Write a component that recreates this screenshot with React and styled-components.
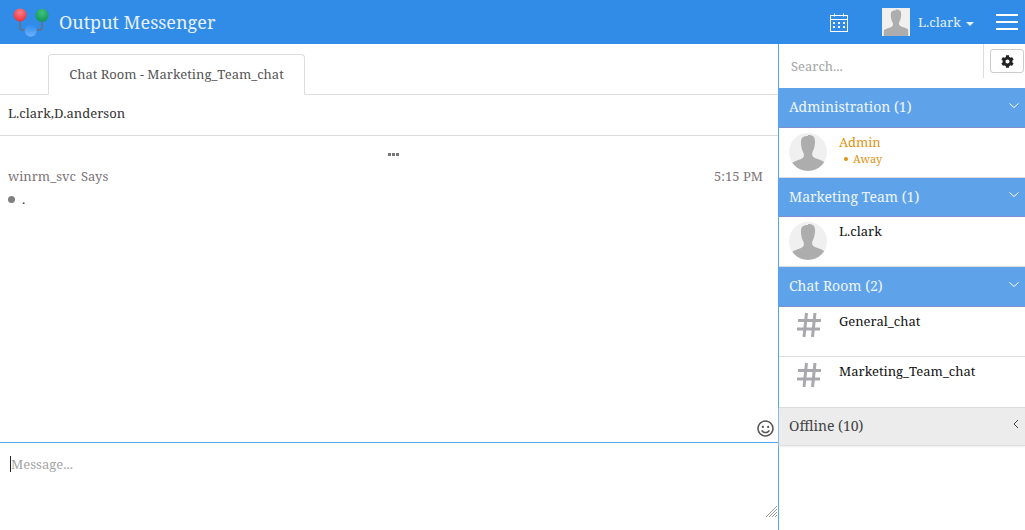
import React from "react";
import styled, { createGlobalStyle } from "styled-components";
import { FaCog, FaRegSmile } from "react-icons/fa";

const GlobalStyle = createGlobalStyle`
  html, body {
    margin: 0;
    padding: 0;
    background: #fff;
    font-family: "Noto Serif", "DejaVu Serif", "Liberation Serif", serif;
    overflow: hidden;
  }
  * { box-sizing: border-box; }
`;

const Logo = () => (
  <svg width="40" height="34" viewBox="0 0 40 34">
    <defs>
      <radialGradient id="red" cx="50%" cy="30%" r="70%">
        <stop offset="0" stopColor="#ff8088" />
        <stop offset="1" stopColor="#e8303c" />
      </radialGradient>
      <radialGradient id="green" cx="50%" cy="30%" r="70%">
        <stop offset="0" stopColor="#3fc47e" />
        <stop offset="1" stopColor="#129456" />
      </radialGradient>
      <linearGradient id="blue" x1="0" y1="0" x2="0" y2="1">
        <stop offset="0" stopColor="#2f8cf0" />
        <stop offset="1" stopColor="#6cb0ff" />
      </linearGradient>
    </defs>
    <path d="M9 10v12q0 3 3 3h16q3 0 3-3v-12" fill="none" stroke="#5a7596" strokeWidth="2" />
    <circle cx="9" cy="10" r="6.500" fill="url(#red)" />
    <circle cx="31" cy="10.300" r="6.500" fill="url(#green)" />
    <circle cx="19.700" cy="25.700" r="6" fill="url(#blue)" />
  </svg>
);

const Person = () => (
  <svg width="100%" height="100%" viewBox="0 0 38 38">
    <path
      d="M19 3c-4.500 0-7 1.500-7 6 0 2 0 3 .4 4.500.2 1 .2 2 .6 3 .4 1.200 1 2.500 1.500 3.500.5 1 .5 3 0 4-.8 1.500-3.500 2.500-6.500 3.500-3 1-4.500 1.800-5.500 3V38h33v-8.500c-1-1.200-2.500-2-5.500-3s-5.700-2-6.500-3.500c-.5-1-.5-3 0-4 .5-1 1.100-2.300 1.500-3.500.4-1 .4-2 .6-3 .4-1.500.4-2.500.4-4.500 0-4.500-2.500-6-7-6z"
      fill="#adadad"
    />
  </svg>
);

const Calendar = () => (
  <svg width="18" height="19" viewBox="0 0 18 19" fill="none" stroke="#fff">
    <rect x=".5" y="2.500" width="17" height="16" />
    <path d="M.5 6.500h17M4.500 .5v3M13.500 .5v3" />
    <g fill="#fff" stroke="none">
      <rect x="3" y="9" width="2" height="2" />
      <rect x="8" y="9" width="2" height="2" />
      <rect x="13" y="9" width="2" height="2" />
      <rect x="3" y="13" width="2" height="2" />
      <rect x="8" y="13" width="2" height="2" />
      <rect x="13" y="13" width="2" height="2" />
    </g>
  </svg>
);

const Hash = () => (
  <svg width="26" height="26" viewBox="0 0 26 26" fill="none" stroke="#a9a9ad" strokeWidth="3">
    <path d="M10.500 1 8 25M19 1 16.500 25M2 8.500h23M1 17h23" />
  </svg>
);

const Chevron = ({ $left }) => (
  <svg width="10" height="10" viewBox="0 0 10 10" fill="none" stroke={$left ? "#444" : "#fff"} strokeWidth="1">
    <path d={$left ? "M7 1 3 5l4 4" : "M.5 2.500 5 6.500l4.500-4"} />
  </svg>
);

const ResizeGrip = () => (
  <svg width="11" height="11" viewBox="0 0 11 11" stroke="#999" strokeWidth="1">
    <path d="M0 11 11 0M3 11l8-8M6 11l5-5M9 11l2-2" />
  </svg>
);

export default function App() {
  return (
    <>
      <GlobalStyle />
      <Page>
        <Header>
          <Brand>
            <Logo />
            <BrandName>Output Messenger</BrandName>
          </Brand>
          <HeaderRight>
            <Calendar />
            <UserBlock>
              <HeaderAvatar>
                <Person />
              </HeaderAvatar>
              <UserName>L.clark</UserName>
              <Caret />
            </UserBlock>
            <Burger>
              <span />
              <span />
              <span />
            </Burger>
          </HeaderRight>
        </Header>
        <Body>
          <ChatPane>
            <TabBar>
              <Tab>Chat Room - Marketing_Team_chat</Tab>
            </TabBar>
            <Members>L.clark,D.anderson</Members>
            <Messages>
              <MoreDots>
                <i />
                <i />
                <i />
              </MoreDots>
              <MessageHead>
                <span>
                  winrm_svc<Says>Says</Says>
                </span>
                <span>5:15 PM</span>
              </MessageHead>
              <MessageLine>
                <Bullet />
                <span>.</span>
              </MessageLine>
              <EmojiButton>
                <FaRegSmile size={17} />
              </EmojiButton>
            </Messages>
            <Composer>
              <Cursor />
              <Placeholder>Message...</Placeholder>
              <Grip>
                <ResizeGrip />
              </Grip>
            </Composer>
          </ChatPane>
          <Sidebar>
            <SearchRow>
              <SearchText>Search...</SearchText>
              <SettingsButton>
                <FaCog size={13} />
              </SettingsButton>
            </SearchRow>
            <GroupHeader>
              Administration (1)
              <ChevronSlot>
                <Chevron />
              </ChevronSlot>
            </GroupHeader>
            <ContactRow>
              <ContactAvatar>
                <Person />
              </ContactAvatar>
              <ContactInfo>
                <ContactName $away>Admin</ContactName>
                <AwayStatus>
                  <AwayDot />
                  Away
                </AwayStatus>
              </ContactInfo>
            </ContactRow>
            <GroupHeader>
              Marketing Team (1)
              <ChevronSlot>
                <Chevron />
              </ChevronSlot>
            </GroupHeader>
            <ContactRow>
              <ContactAvatar>
                <Person />
              </ContactAvatar>
              <ContactInfo>
                <ContactName>L.clark</ContactName>
              </ContactInfo>
            </ContactRow>
            <GroupHeader>
              Chat Room (2)
              <ChevronSlot>
                <Chevron />
              </ChevronSlot>
            </GroupHeader>
            <ContactRow>
              <RoomIcon>
                <Hash />
              </RoomIcon>
              <ContactInfo>
                <ContactName>General_chat</ContactName>
              </ContactInfo>
            </ContactRow>
            <ContactRow>
              <RoomIcon>
                <Hash />
              </RoomIcon>
              <ContactInfo>
                <ContactName>Marketing_Team_chat</ContactName>
              </ContactInfo>
            </ContactRow>
            <OfflineHeader>
              Offline (10)
              <OfflineChevron>
                <Chevron $left />
              </OfflineChevron>
            </OfflineHeader>
          </Sidebar>
        </Body>
      </Page>
    </>
  );
}

const Page = styled.div`
  width: 1025px;
  height: 530px;
  display: flex;
  flex-direction: column;
`;

const Header = styled.header`
  height: 44px;
  flex: none;
  background: #318ce7;
  display: flex;
  align-items: center;
  justify-content: space-between;
  padding: 0 7px 0 11px;
`;

const Brand = styled.div`
  display: flex;
  align-items: center;
  gap: 8px;
`;

const BrandName = styled.span`
  color: #e6f1fc;
  font-size: 18px;
`;

const HeaderRight = styled.div`
  display: flex;
  align-items: center;
`;

const UserBlock = styled.div`
  display: flex;
  align-items: center;
  margin-left: 34px;
  width: 114px;
`;

const HeaderAvatar = styled.div`
  width: 28px;
  height: 28px;
  background: #f0f0f0;
  overflow: hidden;
`;

const UserName = styled.span`
  color: #e6f1fc;
  font-size: 13px;
  margin-left: 8px;
`;

const Caret = styled.i`
  width: 0;
  height: 0;
  margin-left: 5px;
  margin-top: 3px;
  border-left: 4px solid transparent;
  border-right: 4px solid transparent;
  border-top: 4px solid #e6f1fc;
`;

const Burger = styled.div`
  width: 22px;
  display: flex;
  flex-direction: column;
  gap: 5px;

  span {
    height: 2px;
    background: #fff;
  }
`;

const Body = styled.div`
  flex: 1;
  display: flex;
  min-height: 0;
`;

const ChatPane = styled.main`
  width: 779px;
  flex: none;
  display: flex;
  flex-direction: column;
  border-right: 1px solid #55a6ee;
`;

const TabBar = styled.div`
  height: 51px;
  flex: none;
  display: flex;
  align-items: flex-end;
  padding-left: 48px;
  border-bottom: 1px solid #ddd;
`;

const Tab = styled.div`
  width: 257px;
  height: 41px;
  margin-bottom: -1px;
  padding-bottom: 2px;
  background: #fff;
  border: 1px solid #ddd;
  border-bottom-color: #fff;
  border-radius: 4px 4px 0 0;
  display: flex;
  align-items: center;
  justify-content: center;
  font-size: 13px;
  color: #555;
`;

const Members = styled.div`
  height: 41px;
  flex: none;
  display: flex;
  align-items: center;
  padding: 0 0 5px 8px;
  border-bottom: 1px solid #ddd;
  font-size: 13px;
  color: #333;
`;

const Messages = styled.section`
  position: relative;
  flex: 1;
  padding: 0 15px 0 8px;
`;

const MoreDots = styled.div`
  display: flex;
  justify-content: center;
  gap: 1px;
  padding: 17px 0 0 16px;
  height: 32px;

  i {
    width: 3px;
    height: 3px;
    background: #777;
  }
`;

const MessageHead = styled.div`
  display: flex;
  justify-content: space-between;
  font-size: 13px;
  line-height: 16px;
  color: #7d7478;
`;

const Says = styled.span`
  margin-left: 5px;
`;

const MessageLine = styled.div`
  display: flex;
  align-items: center;
  gap: 7px;
  margin-top: 7px;
  height: 16px;
  font-size: 13px;
  color: #333;
`;

const Bullet = styled.i`
  width: 7px;
  height: 7px;
  border-radius: 50%;
  background: #808080;
`;

const EmojiButton = styled.div`
  position: absolute;
  right: 4px;
  bottom: 5px;
  color: #555;
  display: flex;
`;

const Composer = styled.div`
  position: relative;
  height: 88px;
  flex: none;
  border-top: 1px solid #55a6ee;
  padding: 13px 0 0 10px;
  display: flex;
  align-items: flex-start;
`;

const Cursor = styled.i`
  width: 1px;
  height: 16px;
  background: #222;
`;

const Placeholder = styled.span`
  font-size: 13px;
  line-height: 16px;
  color: #a4a4a4;
`;

const Grip = styled.div`
  position: absolute;
  right: 1px;
  bottom: 13px;
  display: flex;
`;

const Sidebar = styled.aside`
  flex: 1;
  min-width: 0;
`;

const SearchRow = styled.div`
  height: 44px;
  display: flex;
  align-items: flex-start;
  justify-content: space-between;
  padding-right: 1px;
`;

const SearchText = styled.div`
  position: relative;
  flex: 1;
  height: 44px;
  padding-left: 12px;
  margin-right: 6px;
  display: flex;
  align-items: center;
  font-size: 13px;
  color: #a4a4a4;

  &::after {
    content: "";
    position: absolute;
    right: 0;
    top: 0;
    height: 34px;
    border-right: 1px solid #ddd;
  }
`;

const SettingsButton = styled.div`
  width: 34px;
  height: 24px;
  margin-top: 5px;
  border: 1px solid #ccc;
  border-radius: 3px;
  display: flex;
  align-items: center;
  justify-content: center;
  color: #222;
`;

const GroupHeader = styled.div`
  position: relative;
  height: 39.5px;
  background: #5ea3ea;
  border-bottom: 1px solid #7f8fd0;
  display: flex;
  align-items: center;
  padding: 0 0 1.5px 10px;
  font-size: 14px;
  color: #eef6fe;
`;

const OfflineHeader = styled(GroupHeader)`
  height: 39px;
  background: #ececec;
  border-top: 1px solid #ddd;
  border-bottom: 1px solid #ddd;
  color: #444;
  box-shadow: 0 1px 2px #eee;
`;

const ChevronSlot = styled.span`
  position: absolute;
  right: 6px;
  top: 12.9px;
  display: flex;
`;

const OfflineChevron = styled(ChevronSlot)`
  right: 4px;
  top: 11px;
`;

const ContactRow = styled.div`
  height: 50px;
  display: flex;
  border-bottom: 1px solid #ddd;

  &:has(+ ${OfflineHeader}) {
    border-bottom: none;
  }
`;

const ContactAvatar = styled.div`
  width: 38px;
  height: 38px;
  margin: 5px 0 0 10px;
  border-radius: 50%;
  background: #f0f0f0;
  overflow: hidden;
  flex: none;
`;

const RoomIcon = styled.div`
  width: 38px;
  height: 38px;
  margin: 5px -1px 0 11px;
  flex: none;
  display: flex;
  justify-content: center;
`;

const ContactInfo = styled.div`
  margin-left: 12px;
  padding-top: 6px;
`;

const ContactName = styled.div`
  font-size: 13px;
  line-height: 17px;
  color: ${(p) => (p.$away ? "#e09410" : "#111")};
`;

const AwayStatus = styled.div`
  display: flex;
  align-items: center;
  margin-top: 1px;
  padding-left: 5px;
  font-size: 11px;
  line-height: 14px;
  color: #e09410;
`;

const AwayDot = styled.i`
  width: 4px;
  height: 4px;
  border-radius: 50%;
  background: #e09410;
  margin-right: 5px;
`;
